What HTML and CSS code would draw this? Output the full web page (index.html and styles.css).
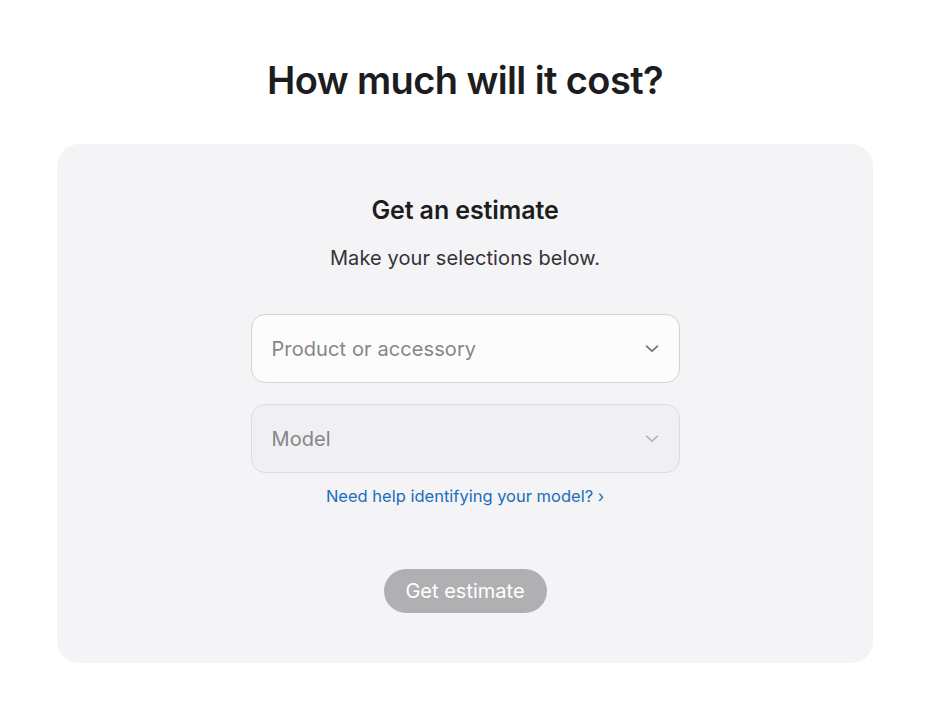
FILE: index.html
```html
<!DOCTYPE html>
<html lang="en">
<head>
    <meta charset="UTF-8">
    <meta name="viewport" content="width=device-width, initial-scale=1.0">
    <title>Repair Estimate</title>
    <link rel="stylesheet" href="styles.css">
</head>
<body>
    <section class="estimate">
        <h1 class="estimate-title">How much will it cost?</h1>

        <div class="estimate-card">
            <h2 class="card-title">Get an estimate</h2>
            <p class="card-intro">Make your selections below.</p>

            <div class="select-box">
                <span class="select-label">Product or accessory</span>
                <svg class="chevron" width="14" height="8" viewBox="0 0 14 8">
                    <path d="M1.5 1.2 L7 6.2 L12.5 1.2" fill="none" stroke="currentColor" stroke-width="1.6" stroke-linecap="round" stroke-linejoin="round"/>
                </svg>
            </div>

            <div class="select-box disabled">
                <span class="select-label">Model</span>
                <svg class="chevron" width="14" height="8" viewBox="0 0 14 8">
                    <path d="M1.5 1.2 L7 6.2 L12.5 1.2" fill="none" stroke="currentColor" stroke-width="1.6" stroke-linecap="round" stroke-linejoin="round"/>
                </svg>
            </div>

            <a class="help-link" href="#">Need help identifying your model? ›</a>

            <button class="estimate-btn" disabled>Get estimate</button>
        </div>
    </section>
</body>
</html>
```

FILE: styles.css
```css
body {
    margin: 0;
    padding: 0 6px 0 0;
    background-color: #fff;
    font-family: 'Inter', 'Liberation Sans', sans-serif;
    color: #1d1d1f;
}

.estimate {
    display: flex;
    flex-direction: column;
    align-items: center;
    padding-top: 56px;
}

.estimate-title {
    margin: 0;
    font-size: 38px;
    font-weight: 600;
    letter-spacing: -0.6px;
    line-height: 48px;
}

.estimate-card {
    margin-top: 40px;
    width: 816px;
    height: 519px;
    box-sizing: border-box;
    background-color: #f4f4f6;
    border-radius: 22px;
    display: flex;
    flex-direction: column;
    align-items: center;
    padding-top: 50px;
}

.card-title {
    margin: 0;
    font-size: 25px;
    font-weight: 600;
    line-height: 32px;
    letter-spacing: -0.1px;
}

.card-intro {
    margin: 18px 0 0;
    font-size: 20px;
    line-height: 28px;
    color: #333336;
    letter-spacing: 0.1px;
}

.select-box {
    margin-top: 42px;
    width: 429px;
    height: 69px;
    box-sizing: border-box;
    border: 1px solid #d2d2d7;
    border-radius: 14px;
    background-color: #fcfcfd;
    display: flex;
    align-items: center;
    justify-content: space-between;
    padding: 0 20px 0 20px;
    color: #6e6e73;
}

.select-box + .select-box {
    margin-top: 21px;
}

.select-label {
    font-size: 20px;
    color: #86868b;
    letter-spacing: 0.1px;
}

.select-box.disabled {
    background-color: #f0f0f2;
    border-color: #dcdce0;
}

.select-box.disabled .chevron {
    color: #b4b4b9;
}

.help-link {
    margin-top: 12px;
    font-size: 16.5px;
    line-height: 22px;
    color: #1a6dbd;
    text-decoration: none;
}

.estimate-btn {
    margin-top: 62px;
    width: 163px;
    height: 44px;
    border: none;
    border-radius: 22px;
    background-color: #b0b0b3;
    color: #fff;
    font-family: inherit;
    font-size: 20px;
    padding: 0;
}
```
